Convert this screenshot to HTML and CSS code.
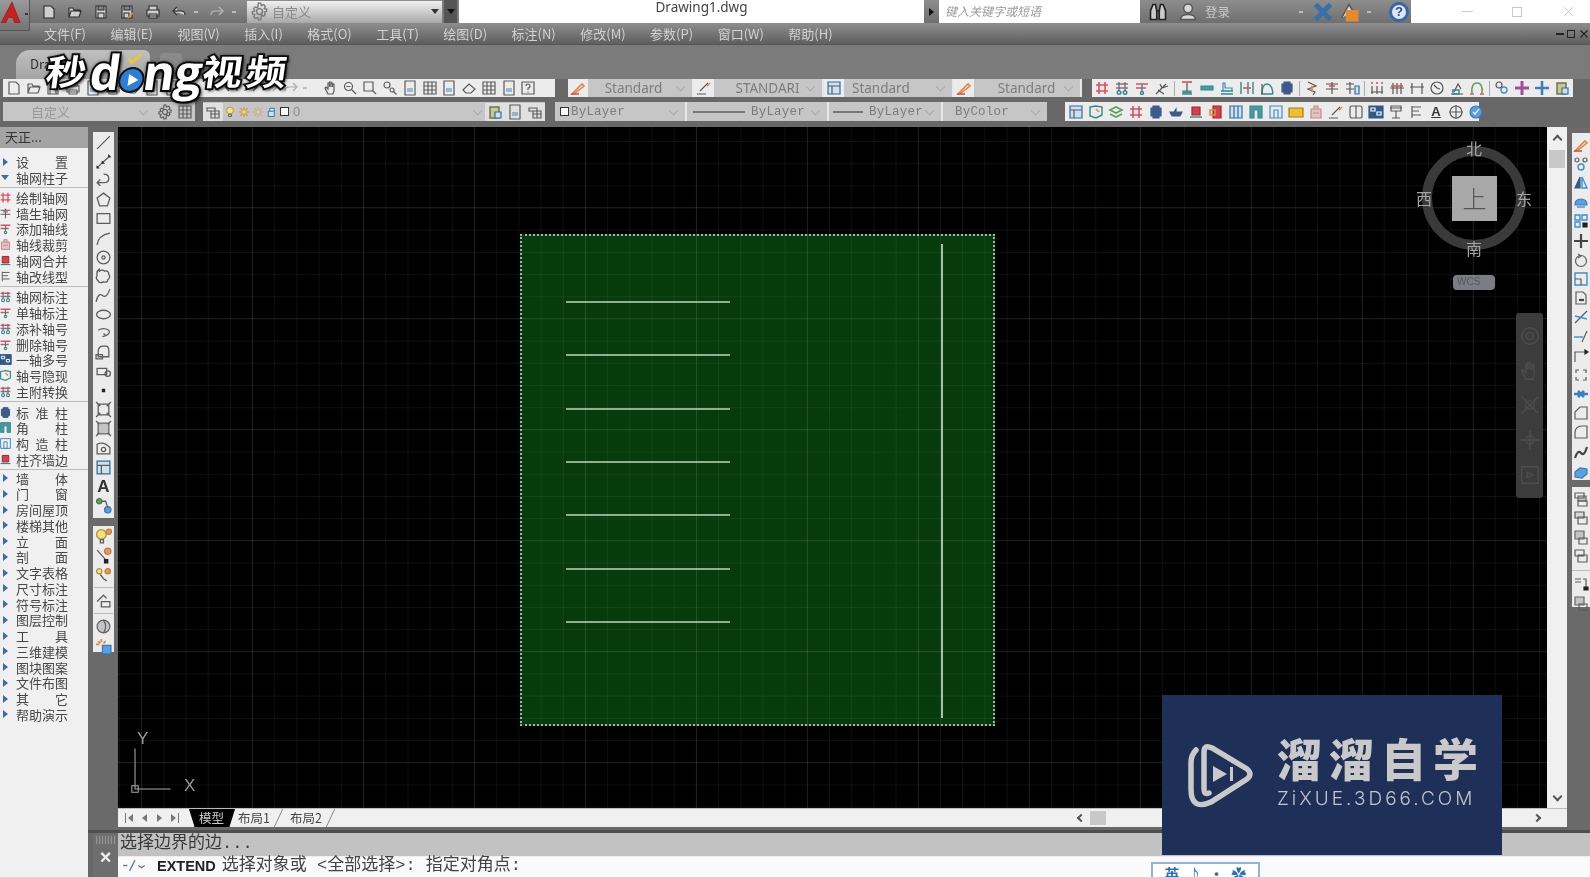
FILE: index.html
```html
<!DOCTYPE html>
<html lang="zh-CN">
<head>
<meta charset="utf-8">
<title>Drawing1.dwg</title>
<link rel="stylesheet" href="styles.css">
</head>
<body>
<svg class="defs" width="0" height="0">
  <symbol id="new" viewBox="0 0 16 16"><path d="M3 2h7l3 3v9H3z"/></symbol>
  <symbol id="open" viewBox="0 0 16 16"><path d="M2 13V4h4l1 2h6v2M2 13l2-6h10l-2 6z"/></symbol>
  <symbol id="save" viewBox="0 0 16 16"><path d="M3 2h10v12H3zM5 2v4h6V2M5 9h6v5H5z"/></symbol>
  <symbol id="saveas" viewBox="0 0 16 16"><path d="M3 2h10v12H3zM5 2v4h6V2M5 9h5v5H5z"/><path class="o" d="M9 14l5-5"/></symbol>
  <symbol id="print" viewBox="0 0 16 16"><path d="M4 6V2h8v4M2 6h12v6H2zM4 10h8v4H4z"/></symbol>
  <symbol id="undo" viewBox="0 0 16 16"><path d="M6 3L2 7l4 4M2 7h8q4 0 4 4"/></symbol>
  <symbol id="redo" viewBox="0 0 16 16"><path d="M10 3l4 4-4 4M14 7H6q-4 0-4 4"/></symbol>
  <symbol id="gear" viewBox="0 0 16 16"><circle cx="8" cy="8" r="2.5"/><path d="M7 1h2l.5 2 2-.8 1.4 1.4-.9 2 2 .4v2l-2 .5.9 2-1.4 1.4-2-.9L9 15H7l-.5-2-2 .9-1.4-1.4.9-2-2-.5V8l2-.4-.9-2 1.4-1.4 2 .8z"/></symbol>
  <symbol id="hand" viewBox="0 0 16 16"><path d="M5 14L2 8l1-1 2 2V3h1.500v4V2H8v5V3h1.500v4V4H11v7l-1 3z"/></symbol>
  <symbol id="zoom" viewBox="0 0 16 16"><circle cx="6.500" cy="6.500" r="4"/><path d="M9.500 9.500l4.500 4.500M4.500 6.500h4"/></symbol>
  <symbol id="zoomw" viewBox="0 0 16 16"><path d="M2 2h9v9H2zM10 10l4 4"/></symbol>
  <symbol id="zoomp" viewBox="0 0 16 16"><circle cx="5" cy="5" r="3"/><circle cx="10" cy="10" r="2"/><path d="M11.500 11.500l3 3"/></symbol>
  <symbol id="doc" viewBox="0 0 16 16"><path d="M3 1h10v14H3z"/><path class="b" d="M5 9h6M5 11h6"/></symbol>
  <symbol id="grid" viewBox="0 0 16 16"><path d="M2 2h12v12H2zM2 6h12M2 10h12M6 2v12M10 2v12"/></symbol>
  <symbol id="help" viewBox="0 0 16 16"><path d="M2 2h12v12H2zM6 6q0-2 2-2t2 2-2 2v2M8 11.500v1"/></symbol>
  <symbol id="erase" viewBox="0 0 16 16"><path d="M2 10l6-6 6 5-4 4H5z"/></symbol>
  <symbol id="hash" viewBox="0 0 16 16"><path class="r" d="M5 2v12M11 2v12M2 5h12M2 11h12"/></symbol>
  <symbol id="hash2" viewBox="0 0 16 16"><path class="r" d="M2 4h12M2 8h12"/><path class="t" d="M5 2v9M11 2v9"/><circle class="t" cx="5" cy="12.500" r="1.800"/><circle class="t" cx="11" cy="12.500" r="1.800"/></symbol>
  <symbol id="hash3" viewBox="0 0 16 16"><path class="r" d="M2 4h12M2 8h10"/><path class="t" d="M8 4v7"/><circle class="t" cx="8" cy="13" r="1.500"/></symbol>
  <symbol id="tool" viewBox="0 0 16 16"><path d="M2 14l6-6M6 4l2 4 4-4M8 8l6-2M4 10l6 4"/></symbol>
  <symbol id="sec" viewBox="0 0 16 16"><path class="r" d="M3 2h10"/><path class="t" d="M3 14h10"/><path class="ti" d="M4 11h8v2H4z"/><path d="M8 3v8"/></symbol>
  <symbol id="bar" viewBox="0 0 16 16"><path class="ti" d="M2 6h12v4H2z"/></symbol>
  <symbol id="steps" viewBox="0 0 16 16"><path class="t" d="M2 14h12M2 11h12"/><path class="b" d="M4 11V3h2v5h7v3"/></symbol>
  <symbol id="dim" viewBox="0 0 16 16"><path class="t" d="M2 2v12M14 2v12M9 2v12"/><path class="r" d="M4 8h8"/></symbol>
  <symbol id="arch" viewBox="0 0 16 16"><path class="t" d="M2 14h12M3 14Q3 4 8 4t6 10"/><path d="M3 14V4"/></symbol>
  <symbol id="col" viewBox="0 0 16 16"><path class="nv" d="M5 2h6v2h2v8h-2v2H5v-2H3V4h2z"/></symbol>
  <symbol id="axis" viewBox="0 0 16 16"><path d="M4 2l8 4-8 3 7 3-2 3"/><path class="o" d="M8 6v6"/></symbol>
  <symbol id="axis2" viewBox="0 0 16 16"><path d="M2 4h12M2 9h12M8 2v12"/><path class="r" d="M5 6h6"/></symbol>
  <symbol id="axis3" viewBox="0 0 16 16"><path d="M2 4h8M2 9h8M6 2v12"/><path class="bl" d="M11 6h4v8h-4z"/></symbol>
  <symbol id="ticks" viewBox="0 0 16 16"><path d="M2 12h12M3 6v8M8 6v8M13 6v8"/><path class="r" d="M3 2v2M8 2v2M13 2v2"/></symbol>
  <symbol id="ticks2" viewBox="0 0 16 16"><path d="M1 8h14M4 3v11M8 3v11M12 3v11"/><path class="r" d="M2 6h12"/></symbol>
  <symbol id="ticks3" viewBox="0 0 16 16"><path d="M1 7h14M3 3v11M13 3v11"/></symbol>
  <symbol id="clock" viewBox="0 0 16 16"><circle cx="8" cy="8" r="6"/><path d="M5 5l3 3 3 1"/></symbol>
  <symbol id="scope" viewBox="0 0 16 16"><path d="M2 14h12M5 12l4-8 3 5"/><path class="t" d="M4 10h6v4H4z"/></symbol>
  <symbol id="loop" viewBox="0 0 16 16"><path class="g" d="M3 13Q2 3 8 3t5 10"/><path class="r" d="M1 14h4M11 14h4"/></symbol>
  <symbol id="links" viewBox="0 0 16 16"><circle cx="5" cy="5" r="3"/><circle class="bg" cx="10" cy="10" r="3"/></symbol>
  <symbol id="plus" viewBox="0 0 16 16"><path class="wp" d="M8 1v14M1 8h14"/></symbol>
  <symbol id="plusb" viewBox="0 0 16 16"><path class="thb" d="M8 1v14M1 8h14"/></symbol>
  <symbol id="clip" viewBox="0 0 16 16"><path class="ol" d="M3 3h9v11H3z"/><path class="bl" d="M8 8h6v6H8z"/></symbol>
  <symbol id="tbl" viewBox="0 0 16 16"><path class="bl" d="M2 2h12v12H2z"/><path d="M2 6h12M6 6v8"/></symbol>
  <symbol id="map" viewBox="0 0 16 16"><path class="t" d="M2 3l6-1 6 1v8l-6 3-6-2z"/><path class="o" d="M8 5l3 3"/></symbol>
  <symbol id="stack" viewBox="0 0 16 16"><path class="g" d="M2 6l6-3 6 3-6 3zM2 10l6 3 6-3"/></symbol>
  <symbol id="ship" viewBox="0 0 16 16"><path class="nv" d="M2 8h4l2-3v3h6l-2 4H4z"/></symbol>
  <symbol id="redb" viewBox="0 0 16 16"><path class="rf" d="M4 3h8v8H4z"/><path class="t" d="M2 13h12"/></symbol>
  <symbol id="pdf" viewBox="0 0 16 16"><path class="rf" d="M5 2h8v12H5z"/><path class="o" d="M2 6h5v5H2z"/></symbol>
  <symbol id="cols" viewBox="0 0 16 16"><path class="bl" d="M2 2h12v12H2zM6 2v12M10 2v12"/></symbol>
  <symbol id="door" viewBox="0 0 16 16"><path class="ti" d="M2 2h12v12h-4V6H6v8H2z"/></symbol>
  <symbol id="door2" viewBox="0 0 16 16"><path class="b" d="M2 2h12v12H2zM6 6h4v8H6z"/></symbol>
  <symbol id="mail" viewBox="0 0 16 16"><path class="yl" d="M1 4h14v9H1z"/></symbol>
  <symbol id="stamp" viewBox="0 0 16 16"><path class="pk" d="M3 5h10v9H3zM6 5V2h4v3M5 9h6"/></symbol>
  <symbol id="brush" viewBox="0 0 16 16"><path d="M1 14h9M4 11l8-8"/><path class="o" d="M11 6l3-3"/></symbol>
  <symbol id="book" viewBox="0 0 16 16"><path d="M4 2h8q2 0 2 2v9q0 1-2 1H4q-2 0-2-2V4q0-2 2-2zM8 2v12"/></symbol>
  <symbol id="blocks" viewBox="0 0 16 16"><path class="nvf" d="M1 2h14v12H1z"/><path class="wh" d="M3 4h4v3H3zM9 8h4v3H9z"/></symbol>
  <symbol id="tree" viewBox="0 0 16 16"><path d="M3 2h10v5H3zM8 7v7M4 14h8M2 4h12"/></symbol>
  <symbol id="flag" viewBox="0 0 16 16"><path d="M4 2v12M4 3h9M4 7h7M4 11h9"/></symbol>
  <symbol id="target" viewBox="0 0 16 16"><circle cx="8" cy="8" r="6"/><path d="M8 1v14M1 8h14"/></symbol>
  <symbol id="ball" viewBox="0 0 16 16"><circle class="blf" cx="8" cy="8" r="6"/><path class="wh" d="M5 8l2 2 4-5"/></symbol>
  <symbol id="layer" viewBox="0 0 16 16"><path d="M2 4h8v3H2zM6 7h8v7H6zM6 10h8M10 7v7"/></symbol>
  <symbol id="bulb" viewBox="0 0 16 16"><circle class="yf" cx="8" cy="6" r="4.500"/><path d="M6 11h4v3H6z"/></symbol>
  <symbol id="sun" viewBox="0 0 16 16"><circle class="yf" cx="8" cy="8" r="3"/><path class="o" d="M8 1v3M8 12v3M1 8h3M12 8h3M3 3l2 2M11 11l2 2M13 3l-2 2M5 11l-2 2"/></symbol>
  <symbol id="lock" viewBox="0 0 16 16"><path class="bl" d="M3 7h8v7H3zM5 7V3h6v4"/></symbol>
  <symbol id="line" viewBox="0 0 16 16"><path d="M2 14L14 2"/></symbol>
  <symbol id="pline" viewBox="0 0 16 16"><path d="M2 14l5-5 7-6"/><path class="k" d="M2 13v1h1zM7 8.500v1h1zM13 2.500v1h1z"/></symbol>
  <symbol id="back" viewBox="0 0 16 16"><path d="M8 2q5 0 5 4t-5 4H2M5 7l-3 3 3 3"/></symbol>
  <symbol id="poly" viewBox="0 0 16 16"><path d="M8 2l6 4.500-2.300 7.500H4.300L2 6.500z"/></symbol>
  <symbol id="rect" viewBox="0 0 16 16"><path d="M2 3.500h12v9H2z"/></symbol>
  <symbol id="arc" viewBox="0 0 16 16"><path d="M2 14Q3 5 14 3"/></symbol>
  <symbol id="circle" viewBox="0 0 16 16"><circle cx="8" cy="8" r="6"/><circle cx="8" cy="8" r="1.500"/></symbol>
  <symbol id="cloud" viewBox="0 0 16 16"><path d="M4 3q3-2 5 0 4-1 4 3 2 3-1 5 0 3-4 2-4 2-5-1-3-2-1-5-1-4 2-6z"/></symbol>
  <symbol id="spline" viewBox="0 0 16 16"><path d="M1 14q2-9 6-6t7-6"/></symbol>
  <symbol id="ell" viewBox="0 0 16 16"><ellipse cx="8" cy="8" rx="6.500" ry="4"/></symbol>
  <symbol id="earc" viewBox="0 0 16 16"><path d="M3 5q5-3 10 0 2 3-3 5M7 11l3-1-2-2"/></symbol>
  <symbol id="ins" viewBox="0 0 16 16"><path d="M3 12V7q0-5 5-5h2q3 0 3 4v6zM1 10h6v4H1z"/></symbol>
  <symbol id="blk" viewBox="0 0 16 16"><path d="M2 5h9v6H2z"/><circle cx="12" cy="10" r="2.500"/></symbol>
  <symbol id="pt" viewBox="0 0 16 16"><path class="k" d="M7 7h2v2H7z"/></symbol>
  <symbol id="hatch" viewBox="0 0 16 16"><path d="M3 3h10v10H3zM1 1l4 4M15 1l-4 4M1 15l4-4M15 15l-4-4"/></symbol>
  <symbol id="grad" viewBox="0 0 16 16"><path class="gyf" d="M3 3h10v10H3z"/><path d="M1 1l3 3M15 1l-3 3M1 15l3-3M15 15l-3-3"/></symbol>
  <symbol id="reg" viewBox="0 0 16 16"><path d="M2 13V4q6-3 12 3v6z"/><circle cx="8" cy="9" r="2"/></symbol>
  <symbol id="add" viewBox="0 0 16 16"><circle class="gf" cx="4" cy="4" r="2.500"/><circle class="blf" cx="12" cy="12" r="3"/><path d="M6 4h4l2 6"/></symbol>
  <symbol id="bulbo" viewBox="0 0 16 16"><circle class="yf" cx="6" cy="6" r="4.500"/><circle class="of" cx="13" cy="3.500" r="2.500"/><path d="M5 11h3v3H5z"/></symbol>
  <symbol id="wand" viewBox="0 0 16 16"><path d="M2 3l9 10"/><circle class="of" cx="12" cy="4" r="3"/><path class="k" d="M9 12h3v3H9z"/></symbol>
  <symbol id="dots" viewBox="0 0 16 16"><circle class="yf" cx="4" cy="5" r="2.500"/><circle class="of" cx="12" cy="5" r="2.500"/><path d="M5 8l3 4 3 2"/></symbol>
  <symbol id="house" viewBox="0 0 16 16"><path d="M2 9l6-6 3 3M6 9h8v5H6z"/></symbol>
  <symbol id="globe" viewBox="0 0 16 16"><circle class="gyf" cx="8" cy="8" r="6"/><path d="M8 2q4 6 0 12"/></symbol>
  <symbol id="star" viewBox="0 0 16 16"><path class="o" d="M6 1v3M1 6h3M3 3l2 2M10 3L8 5"/><path class="blf" d="M7 7h8v8H7z"/></symbol>
  <symbol id="pen" viewBox="0 0 16 16"><path class="o" d="M2 14l10-10 2 2-10 8z"/><path class="r" d="M1 14h8"/></symbol>
  <symbol id="copy" viewBox="0 0 16 16"><circle cx="4" cy="4" r="2"/><circle cx="12" cy="4" r="2"/><circle class="bg" cx="8" cy="11" r="3"/></symbol>
  <symbol id="mirror" viewBox="0 0 16 16"><path class="nvf" d="M7 2L2 13h5z"/><path class="bg" d="M9 2l5 11H9z"/></symbol>
  <symbol id="offset" viewBox="0 0 16 16"><path class="blf" d="M2 11q0-6 6-6t6 6z"/><path class="bg" d="M4 13h8"/></symbol>
  <symbol id="array" viewBox="0 0 16 16"><path class="bg" d="M2 2h5v5H2zM9 2h5v5H9zM2 9h5v5H2z"/><path class="k" d="M10 10h4v4h-4z"/></symbol>
  <symbol id="move" viewBox="0 0 16 16"><path class="thk" d="M8 1v14M1 8h14"/></symbol>
  <symbol id="rot" viewBox="0 0 16 16"><circle cx="8" cy="9" r="5.500"/><path d="M5 2l3 2-3 2"/></symbol>
  <symbol id="scale" viewBox="0 0 16 16"><path class="bg" d="M2 2h12v12H2z"/><path d="M2 8h6v6"/></symbol>
  <symbol id="stretch" viewBox="0 0 16 16"><path d="M3 2h7l3 3v9H3z"/><path class="thk" d="M6 10h5"/></symbol>
  <symbol id="trim" viewBox="0 0 16 16"><path d="M2 14L14 2"/><path class="bg" d="M2 7l12 3"/></symbol>
  <symbol id="ext" viewBox="0 0 16 16"><path d="M14 3L9 14"/><path class="bg" d="M1 9h9"/></symbol>
  <symbol id="brk" viewBox="0 0 16 16"><path d="M2 14V4h10"/><path class="k" d="M12 2l3 2-3 2z"/></symbol>
  <symbol id="brk2" viewBox="0 0 16 16"><path d="M3 6V3h3M10 3h3v3M13 10v3h-3M6 13H3v-3"/></symbol>
  <symbol id="join" viewBox="0 0 16 16"><path class="thb" d="M1 8h5M10 8h5M5 5l3 3-3 3M11 5L8 8l3 3"/></symbol>
  <symbol id="cham" viewBox="0 0 16 16"><path d="M2 14V7l5-5h7v12z"/></symbol>
  <symbol id="fil" viewBox="0 0 16 16"><path d="M2 14V9q0-7 7-7h5v12z"/></symbol>
  <symbol id="wav" viewBox="0 0 16 16"><path class="thk" d="M2 14q3-9 6-5t6-6"/></symbol>
  <symbol id="ex" viewBox="0 0 16 16"><path class="blf" d="M2 9l5-4 7 1v5l-5 4-7-1z"/></symbol>
  <symbol id="draw1" viewBox="0 0 16 16"><path class="gyf" d="M5 5h8v5H5z"/><path d="M2 2h9v5H2zM5 10h9v5H5z"/></symbol>
  <symbol id="draw2" viewBox="0 0 16 16"><path class="wf" d="M2 2h9v6H2z"/><path d="M5 7h9v7H5z"/></symbol>
  <symbol id="draw3" viewBox="0 0 16 16"><path d="M2 2h9v6H2zM5 7h9v7H5z"/></symbol>
  <symbol id="abc" viewBox="0 0 16 16"><path d="M2 4h6M2 7h6M10 4h3v8"/><path class="k" d="M11 12h4v3h-4z"/></symbol>
  <symbol id="bx" viewBox="0 0 16 16"><path class="gyf" d="M2 2h9v8H2z"/><path d="M6 9h8v6H6z"/></symbol>
</svg>

<div class="app">
  <header class="titlebar">
    <div class="t-grey t-left">
      <svg class="i"><use href="#new"/></svg>
      <svg class="i"><use href="#open"/></svg>
      <svg class="i"><use href="#save"/></svg>
      <svg class="i"><use href="#saveas"/></svg>
      <svg class="i"><use href="#print"/></svg>
      <svg class="i"><use href="#undo"/></svg>
      <span class="dot"></span>
      <svg class="i faint"><use href="#redo"/></svg>
      <span class="dot"></span>
      <div class="wscombo">
        <svg class="i"><use href="#gear"/></svg>
        <span class="wsname">自定义</span>
        <span class="caret"></span>
      </div>
      <div class="darkbtn"><span class="caret dark"></span></div>
    </div>
    <div class="t-white t-doc">Drawing1.dwg</div>
    <div class="t-grey t-arrow"><span class="tri"></span></div>
    <div class="t-search">键入关键字或短语</div>
    <div class="t-grey t-right">
      <svg class="binoc" viewBox="0 0 16 16"><path d="M2 14V7l2-5h2l1 5v7zM9 14V7l1-5h2l2 5v7zM7 7h2"/></svg>
      <svg class="i user" viewBox="0 0 16 16"><circle class="wf" cx="8" cy="5" r="3.500"/><path class="wf" d="M2 14q0-4 6-4t6 4z"/></svg>
      <span class="login">登录</span>
      <span class="dot d1"></span>
      <svg class="i xch" viewBox="0 0 16 16"><path class="xb" d="M2 2l12 12M14 2L2 14"/></svg>
      <svg class="i lk" viewBox="0 0 16 16"><path class="wf" d="M2 13L8 2l3 5"/><path class="oflat" d="M6 7h9v8H6z"/></svg>
      <span class="dot"></span>
      <span class="qm">?</span>
      <span class="dot"></span>
    </div>
    <div class="t-white t-win">
      <span class="w-min"></span>
      <span class="w-max"></span>
      <svg class="w-x" viewBox="0 0 12 12"><path d="M1 1l10 10M11 1L1 11"/></svg>
    </div>
  </header>

  <nav class="menubar">
    <span class="mi">文件(F)</span><span class="mi">编辑(E)</span><span class="mi">视图(V)</span><span class="mi">插入(I)</span><span class="mi">格式(O)</span><span class="mi">工具(T)</span><span class="mi">绘图(D)</span><span class="mi">标注(N)</span><span class="mi">修改(M)</span><span class="mi">参数(P)</span><span class="mi">窗口(W)</span><span class="mi">帮助(H)</span>
    <span class="mdi"><i class="m1"></i><i class="m2"></i><i class="m3">×</i></span>
  </nav>

  <div class="tabbar">
    <div class="doctab">Drawing1</div>
    <div class="newtab"></div>
  </div>

  <div class="tb tb1">
    <div class="seg seg-icons a1">
      <svg class="i"><use href="#new"/></svg><svg class="i"><use href="#open"/></svg><svg class="i"><use href="#save"/></svg><svg class="i"><use href="#print"/></svg><svg class="i"><use href="#doc"/></svg><svg class="i"><use href="#print"/></svg><svg class="i"><use href="#erase"/></svg><svg class="i"><use href="#doc"/></svg><svg class="i"><use href="#doc"/></svg><svg class="i"><use href="#erase"/></svg><svg class="i"><use href="#undo"/></svg><svg class="i"><use href="#undo"/></svg><svg class="i"><use href="#redo"/></svg><svg class="i faint"><use href="#redo"/></svg><svg class="i faint"><use href="#redo"/></svg>
      <span class="dot w20"></span>
      <svg class="i"><use href="#hand"/></svg><svg class="i"><use href="#zoom"/></svg><svg class="i"><use href="#zoomw"/></svg><svg class="i"><use href="#zoomp"/></svg>
      <svg class="i"><use href="#doc"/></svg><svg class="i"><use href="#grid"/></svg><svg class="i"><use href="#doc"/></svg><svg class="i"><use href="#erase"/></svg><svg class="i"><use href="#grid"/></svg><svg class="i"><use href="#doc"/></svg><svg class="i"><use href="#help"/></svg>
    </div>
    <div class="gap g1"></div>
    <div class="seg combo c-s1"><svg class="i"><use href="#pen"/></svg><span class="val">Standard</span><span class="chev"></span></div>
    <div class="seg combo c-s2"><svg class="i"><use href="#brush"/></svg><span class="val wide">STANDARI</span><span class="chev"></span></div>
    <div class="seg combo c-s2"><svg class="i"><use href="#tbl"/></svg><span class="val left">Standard</span><span class="chev"></span></div>
    <div class="seg combo c-s3"><svg class="i"><use href="#pen"/></svg><span class="val wide">Standard</span><span class="chev"></span></div>
    <div class="gap g2"></div>
    <div class="seg seg-icons a2">
      <svg class="i"><use href="#hash"/></svg><svg class="i"><use href="#hash2"/></svg><svg class="i"><use href="#hash3"/></svg><svg class="i"><use href="#tool"/></svg>
      <span class="vs"></span>
      <svg class="i"><use href="#sec"/></svg><svg class="i"><use href="#bar"/></svg><svg class="i"><use href="#steps"/></svg><svg class="i"><use href="#dim"/></svg><svg class="i"><use href="#arch"/></svg><svg class="i"><use href="#col"/></svg>
      <span class="vs"></span>
      <svg class="i"><use href="#axis"/></svg><svg class="i"><use href="#axis2"/></svg><svg class="i"><use href="#axis3"/></svg>
      <span class="vs"></span>
      <svg class="i"><use href="#ticks"/></svg><svg class="i"><use href="#ticks2"/></svg><svg class="i"><use href="#ticks3"/></svg><svg class="i"><use href="#clock"/></svg><svg class="i"><use href="#scope"/></svg><svg class="i"><use href="#loop"/></svg>
      <span class="vs"></span>
      <svg class="i"><use href="#links"/></svg><svg class="i"><use href="#plus"/></svg><svg class="i"><use href="#plusb"/></svg><svg class="i"><use href="#clip"/></svg>
    </div>
  </div>

  <div class="tb tb2">
    <div class="seg combo c-ws"><span class="val left ws">自定义</span><span class="chev"></span><svg class="i"><use href="#gear"/></svg><svg class="i"><use href="#grid"/></svg></div>
    <div class="gap g3"></div>
    <div class="seg combo c-layer">
      <svg class="i"><use href="#layer"/></svg><svg class="i sm"><use href="#bulb"/></svg><svg class="i sm"><use href="#sun"/></svg><svg class="i sm faint"><use href="#sun"/></svg><svg class="i sm"><use href="#lock"/></svg><span class="sw"></span><span class="layer0">0</span><span class="chev"></span>
      <svg class="i"><use href="#clip"/></svg><svg class="i"><use href="#doc"/></svg><svg class="i"><use href="#layer"/></svg>
    </div>
    <div class="gap g4"></div>
    <div class="seg combo c-color"><span class="sw"></span><span class="mono">ByLayer</span><span class="chev"></span></div>
    <div class="seg combo c-lt"><span class="ln"></span><span class="mono">ByLayer</span><span class="chev"></span></div>
    <div class="seg combo c-lw"><span class="ln short"></span><span class="mono">ByLayer</span><span class="chev"></span></div>
    <div class="seg combo c-plot"><span class="mono">ByColor</span><span class="chev"></span></div>
    <div class="gap g5"></div>
    <div class="seg seg-icons a3">
      <svg class="i"><use href="#tbl"/></svg><svg class="i"><use href="#map"/></svg><svg class="i"><use href="#stack"/></svg><svg class="i"><use href="#hash"/></svg><svg class="i"><use href="#col"/></svg><svg class="i"><use href="#ship"/></svg><svg class="i"><use href="#redb"/></svg><svg class="i"><use href="#pdf"/></svg><svg class="i"><use href="#cols"/></svg><svg class="i"><use href="#door"/></svg><svg class="i"><use href="#door2"/></svg><svg class="i"><use href="#mail"/></svg><svg class="i"><use href="#stamp"/></svg><svg class="i"><use href="#brush"/></svg><svg class="i"><use href="#book"/></svg><svg class="i"><use href="#blocks"/></svg><svg class="i"><use href="#tree"/></svg><svg class="i"><use href="#flag"/></svg><span class="a-ic">A</span><svg class="i"><use href="#target"/></svg><svg class="i"><use href="#ball"/></svg>
    </div>
  </div>

  <main class="main">
    <aside class="panel">
      <div class="p-head">天正...</div>
      <div class="p-group first">
        <div class="row"><span class="ar"></span><span class="lb">设 置</span></div>
        <div class="row"><span class="ar down"></span><span class="lb">轴网柱子</span></div>
      </div>
      <div class="p-group">
        <div class="row"><svg class="pi"><use href="#hash"/></svg><span class="lb">绘制轴网</span></div>
        <div class="row"><svg class="pi"><use href="#axis2"/></svg><span class="lb">墙生轴网</span></div>
        <div class="row"><svg class="pi"><use href="#hash3"/></svg><span class="lb">添加轴线</span></div>
        <div class="row"><svg class="pi"><use href="#stamp"/></svg><span class="lb">轴线裁剪</span></div>
        <div class="row"><svg class="pi"><use href="#redb"/></svg><span class="lb">轴网合并</span></div>
        <div class="row"><svg class="pi"><use href="#flag"/></svg><span class="lb">轴改线型</span></div>
      </div>
      <div class="p-group">
        <div class="row"><svg class="pi"><use href="#hash2"/></svg><span class="lb">轴网标注</span></div>
        <div class="row"><svg class="pi"><use href="#hash3"/></svg><span class="lb">单轴标注</span></div>
        <div class="row"><svg class="pi"><use href="#hash2"/></svg><span class="lb">添补轴号</span></div>
        <div class="row"><svg class="pi"><use href="#hash3"/></svg><span class="lb">删除轴号</span></div>
        <div class="row"><svg class="pi"><use href="#blocks"/></svg><span class="lb">一轴多号</span></div>
        <div class="row"><svg class="pi"><use href="#map"/></svg><span class="lb">轴号隐现</span></div>
        <div class="row"><svg class="pi"><use href="#hash2"/></svg><span class="lb">主附转换</span></div>
      </div>
      <div class="p-group">
        <div class="row"><svg class="pi"><use href="#col"/></svg><span class="lb">标 准 柱</span></div>
        <div class="row"><svg class="pi"><use href="#door"/></svg><span class="lb">角 柱</span></div>
        <div class="row"><svg class="pi"><use href="#door2"/></svg><span class="lb">构 造 柱</span></div>
        <div class="row"><svg class="pi"><use href="#redb"/></svg><span class="lb">柱齐墙边</span></div>
      </div>
      <div class="p-group last">
        <div class="row"><span class="ar"></span><span class="lb">墙 体</span></div>
        <div class="row"><span class="ar"></span><span class="lb">门 窗</span></div>
        <div class="row"><span class="ar"></span><span class="lb">房间屋顶</span></div>
        <div class="row"><span class="ar"></span><span class="lb">楼梯其他</span></div>
        <div class="row"><span class="ar"></span><span class="lb">立 面</span></div>
        <div class="row"><span class="ar"></span><span class="lb">剖 面</span></div>
        <div class="row"><span class="ar"></span><span class="lb">文字表格</span></div>
        <div class="row"><span class="ar"></span><span class="lb">尺寸标注</span></div>
        <div class="row"><span class="ar"></span><span class="lb">符号标注</span></div>
        <div class="row"><span class="ar"></span><span class="lb">图层控制</span></div>
        <div class="row"><span class="ar"></span><span class="lb">工 具</span></div>
        <div class="row"><span class="ar"></span><span class="lb">三维建模</span></div>
        <div class="row"><span class="ar"></span><span class="lb">图块图案</span></div>
        <div class="row"><span class="ar"></span><span class="lb">文件布图</span></div>
        <div class="row"><span class="ar"></span><span class="lb">其 它</span></div>
        <div class="row"><span class="ar"></span><span class="lb">帮助演示</span></div>
      </div>
    </aside>

    <div class="work">
      <div class="work-top">
        <div class="vcol">
          <div class="vbar one">
            <svg class="vi"><use href="#line"/></svg><svg class="vi"><use href="#pline"/></svg><svg class="vi"><use href="#back"/></svg><svg class="vi"><use href="#poly"/></svg><svg class="vi"><use href="#rect"/></svg><svg class="vi"><use href="#arc"/></svg><svg class="vi"><use href="#circle"/></svg><svg class="vi"><use href="#cloud"/></svg><svg class="vi"><use href="#spline"/></svg><svg class="vi"><use href="#ell"/></svg><svg class="vi"><use href="#earc"/></svg><svg class="vi"><use href="#ins"/></svg><svg class="vi"><use href="#blk"/></svg><svg class="vi"><use href="#pt"/></svg><svg class="vi"><use href="#hatch"/></svg><svg class="vi"><use href="#grad"/></svg><svg class="vi"><use href="#reg"/></svg><svg class="vi"><use href="#tbl"/></svg><span class="va">A</span><svg class="vi"><use href="#add"/></svg>
          </div>
          <div class="vbar two">
            <svg class="vi"><use href="#bulbo"/></svg><svg class="vi"><use href="#wand"/></svg><svg class="vi"><use href="#dots"/></svg><span class="hs"></span><svg class="vi"><use href="#house"/></svg><span class="hs"></span><svg class="vi"><use href="#globe"/></svg><svg class="vi"><use href="#star"/></svg>
          </div>
        </div>

        <div class="center">
          <div class="cv-row">
            <div class="canvas">
              <div class="limits">
                <span class="hl l1"></span><span class="hl l2"></span><span class="hl l3"></span><span class="hl l4"></span><span class="hl l5"></span><span class="hl l6"></span><span class="hl l7"></span>
                <span class="vl"></span>
              </div>
              <div class="grid-ov"></div>
              <div class="cube">
                <span class="ring"></span>
                <span class="face">上</span>
                <span class="dir n">北</span><span class="dir w">西</span><span class="dir e">东</span><span class="dir s">南</span>
              </div>
              <div class="wcs">WCS</div>
              <div class="navbar">
                <svg class="nv-i" viewBox="0 0 16 16"><circle cx="8" cy="8" r="6"/><circle cx="8" cy="8" r="2.500"/></svg>
                <svg class="nv-i" viewBox="0 0 16 16"><use href="#hand"/></svg>
                <svg class="nv-i" viewBox="0 0 16 16"><path d="M2 2l12 12M14 2L2 14"/><circle cx="8" cy="8" r="3"/></svg>
                <svg class="nv-i" viewBox="0 0 16 16"><path d="M8 1v14M1 8h14"/><circle cx="8" cy="8" r="3"/></svg>
                <svg class="nv-i" viewBox="0 0 16 16"><path d="M2 2h12v12H2zM6 6l4 2-4 2z"/></svg>
              </div>
              <svg class="ucs" viewBox="0 0 60 62"><path d="M4 2v50h44"/><path d="M0 48h8v8H0z"/></svg>
              <span class="ax ay">Y</span><span class="ax ax-x">X</span>
            </div>
            <div class="vscroll">
              <span class="chv up"></span>
              <span class="thumb"></span>
              <span class="chv dn"></span>
            </div>
          </div>
          <div class="ltabs">
            <span class="nav-b bk bar-l"></span><span class="nav-b bk"></span><span class="nav-b fw"></span><span class="nav-b fw bar-r"></span>
            <span class="lt on">模型</span><span class="lt">布局1</span><span class="lt">布局2</span>
            <span class="hs-l"></span><span class="hs-th"></span><span class="hs-r"></span>
          </div>
        </div>

        <div class="rcol">
          <div class="rbar one">
            <svg class="ri"><use href="#pen"/></svg><svg class="ri"><use href="#copy"/></svg><svg class="ri"><use href="#mirror"/></svg><svg class="ri"><use href="#offset"/></svg><svg class="ri"><use href="#array"/></svg><svg class="ri"><use href="#move"/></svg><svg class="ri"><use href="#rot"/></svg><svg class="ri"><use href="#scale"/></svg><svg class="ri"><use href="#stretch"/></svg><svg class="ri"><use href="#trim"/></svg><svg class="ri"><use href="#ext"/></svg><svg class="ri"><use href="#brk"/></svg><svg class="ri"><use href="#brk2"/></svg><svg class="ri"><use href="#join"/></svg><svg class="ri"><use href="#cham"/></svg><svg class="ri"><use href="#fil"/></svg><svg class="ri"><use href="#wav"/></svg><svg class="ri"><use href="#ex"/></svg>
          </div>
          <div class="rbar two">
            <svg class="ri"><use href="#draw1"/></svg><svg class="ri"><use href="#draw2"/></svg><svg class="ri"><use href="#bx"/></svg><svg class="ri"><use href="#draw3"/></svg><span class="hs r"></span><svg class="ri"><use href="#abc"/></svg><svg class="ri"><use href="#bx"/></svg>
          </div>
        </div>
      </div>

      <div class="cmd">
        <div class="grip"><span class="grip-d"></span><span class="cx">×</span></div>
        <div class="cmd-lines">
          <div class="c-hist">选择边界的边...</div>
          <div class="c-in">
            <svg class="c-ic" viewBox="0 0 24 12"><path class="c-s" d="M1 6h4"/><path class="c-b" d="M7 11L12 1"/><path class="c-s" d="M15 6l3 2 3-2"/></svg>
            <b>EXTEND</b><span class="c-tx">选择对象或 &lt;全部选择&gt;: 指定对角点:</span>
          </div>
        </div>
      </div>
    </div>
  </main>

  <div class="a-btn">
    <svg class="a-logo" viewBox="0 0 24 24"><path class="a-red" d="M0 24L12 1l9 23h-6l-2-6H8l-3 6z"/></svg>
    <span class="a-caret"></span>
  </div>

  <div class="wm-top"><span class="wm-c">秒</span><span class="wm-l">d</span><span class="wm-o"><i class="wm-tick"></i><i class="wm-play"></i></span><span class="wm-l">ng</span><span class="wm-c">视频</span></div>

  <div class="wm-box">
    <svg class="wm-logo" viewBox="0 0 66 68"><path d="M21 52Q16 54 16 48V11Q16 3 24 7L59 28Q65 33 59 38L23 61Q3 70 3 48V22Q3 14 8 9"/><path class="wm-f" d="M25 25l14 8-14 8zM42 26h3v14h-3z"/></svg>
    <div class="wm-txt">
      <div class="wm-cn">溜溜自学</div>
      <div class="wm-en">ZiXUE.3D66.COM</div>
    </div>
  </div>

  <div class="ime"><span>英</span><span>♪</span><span>·</span><span>✿</span></div>
</div>
</body>
</html>
```

FILE: styles.css
```css
* { box-sizing: border-box; }
html, body { margin: 0; padding: 0; background: #666; }
body { font-family: "Noto Sans CJK SC", "Liberation Sans", sans-serif; overflow: hidden; }
.defs { position: absolute; }

.app {
  position: relative;
  width: 1590px;
  height: 877px;
  overflow: hidden;
  display: flex;
  flex-direction: column;
  background: #686868;
  filter: blur(.5px);
}

/* shared svg colour classes */
.i, .vi, .ri, .pi { fill: none; stroke: #5c5c5c; stroke-width: 1.2; flex: none; }
.i { width: 16px; height: 16px; margin: 0 2px; }
.faint { opacity: .45; }
.r { stroke: #dc4f60; stroke-width: 1.6; }
.t { stroke: #2f8a8c; stroke-width: 1.4; }
.ti { stroke: #2f8a8c; fill: #4a9aa6; }
.b { stroke: #3a8ac8; }
.bl { stroke: #2f6f9f; fill: #cfe0ee; }
.bg { stroke: #3f8fd0; stroke-width: 1.4; }
.o { stroke: #e08a3a; stroke-width: 1.6; }
.g { stroke: #5aa05a; stroke-width: 1.6; }
.k { fill: #222; stroke: #222; }
.nv { fill: #3c5a8c; stroke: #3c5a8c; }
.nvf { fill: #2f5a88; stroke: #2f5a88; }
.wh { stroke: #fff; fill: none; }
.wp { stroke: #a0509a; stroke-width: 3; }
.thb { stroke: #3a80c0; stroke-width: 2.600; }
.thk { stroke: #444; stroke-width: 2.200; }
.ol { stroke: #6a7a3a; fill: #c9c79a; stroke-width: 1.500; }
.rf { fill: #d8404e; stroke: #a02530; }
.yl { fill: #f0c030; stroke: #a07a20; }
.pk { stroke: #c08a90; fill: #e0c4c4; }
.yf { fill: #f7e27a; stroke: #a89640; }
.of { fill: #e89a58; stroke: #c87a38; }
.gf { fill: #5aa85a; stroke: #3d7d3d; }
.blf { fill: #5aa0e0; stroke: #3a78b8; }
.gyf { fill: #c4c4c4; stroke: #666; }
.wf { fill: #d8d8d8; stroke: #555; }

/* title bar */
.titlebar { height: 23px; display: flex; flex: none; background: #fff; }
.t-grey { background: linear-gradient(#8d8d8d, #6f6f6f); display: flex; align-items: center; height: 23px; flex: none; }
.t-white { background: #fff; height: 23px; flex: none; }
.t-left { width: 459px; padding-left: 36px; }
.t-left .i { margin: 0 5px; stroke: #2d2d2d; fill: #cfcfcf; stroke-width: 1.1; }
.t-left .i.faint { stroke: #bbb; fill: none; opacity: 1; }
.dot { width: 4px; height: 2px; background: #bbb; margin: 0 6px 0 2px; flex: none; }
.w20 { margin: 0 14px 0 2px; }
.wscombo {
  width: 195px; height: 22px; margin-left: 5px; flex: none;
  background: linear-gradient(#f0f0f0, #a8a8a8);
  display: flex; align-items: center; padding-left: 1px;
}
.wscombo .i { stroke: #777; fill: none; margin: 0 3px 0 2px; width: 19px; height: 19px; }
.wsname { font-size: 13px; color: #8a8a8a; }
.caret { margin-left: auto; margin-right: 3px; width: 0; height: 0; border: 4px solid transparent; border-top: 5px solid #333; border-bottom: 0; }
.caret.dark { margin: 0; border-top-color: #111; }
.darkbtn { width: 17px; height: 23px; background: #555; display: flex; align-items: center; justify-content: center; border: 0 solid #7d7d7d; border-width: 0 2px; flex: none; }
.t-doc { width: 465px; text-align: center; font-size: 13.500px; color: #444; line-height: 14px; padding-left: 20px; font-family: "Noto Sans", "Liberation Sans", sans-serif; }
.t-arrow { width: 15px; justify-content: center; }
.tri { width: 0; height: 0; border: 4px solid transparent; border-left: 5px solid #111; border-right: 0; }
.t-search { width: 201px; height: 22px; flex: none; background: #fff; color: #9a9a9a; font-size: 12px; font-style: italic; line-height: 22px; padding-left: 6px; white-space: nowrap; }
.t-right { width: 271px; }
.t-right .i { margin: 0; width: 20px; height: 20px; }
.binoc { width: 20px; height: 20px; margin-left: 8px; flex: none; fill: #ccc; stroke: #222; stroke-width: 1.300; }
.t-right .user { margin-left: 10px; }
.login { color: #c8c8c8; font-size: 12.500px; margin-left: 7px; width: 27px; flex: none; white-space: nowrap; }
.d1 { margin-left: 67px; margin-right: 10px; }
.t-right .xch { margin-right: 6px; }
.xb { stroke: #3a70a8; stroke-width: 4; }
.t-right .lk { margin-right: 6px; }
.oflat { fill: #e58a2c; stroke: #e58a2c; }
.qm { width: 20px; height: 20px; border-radius: 50%; background: #dfe6f2; border: 3px solid #3566a8; color: #2a4f88; font: 700 13px/14px "Liberation Sans", sans-serif; text-align: center; margin: 0 5px 0 12px; flex: none; }
.t-win { width: 180px; display: flex; align-items: center; padding-left: 51px; }
.w-min { width: 11px; height: 1px; background: #c8c8c8; flex: none; }
.w-max { width: 10px; height: 10px; border: 1px solid #c8c8c8; margin-left: 39px; flex: none; }
.w-x { width: 11px; height: 11px; margin-left: 41px; stroke: #c8c8c8; fill: none; flex: none; }

/* menu */
.menubar {
  height: 22px; flex: none; display: flex; align-items: center;
  padding-left: 44px; gap: 24.500px;
  background: linear-gradient(#8e8e8e, #5e5e5e);
  border-bottom: 1px solid #565656;
}
.mi { color: #d2d2d2; font-size: 13px; white-space: nowrap; }
.mdi { margin-left: auto; display: flex; align-items: center; gap: 3px; }
.mdi i { display: block; }
.m1 { width: 8px; height: 2px; background: #222; }
.m2 { width: 8px; height: 8px; border: 1px solid #222; }
.m3 { font-style: normal; font-size: 12px; color: #222; line-height: 12px; font-weight: 700; }

/* file tab row */
.tabbar { height: 34px; flex: none; background: #7b7b7b; display: flex; align-items: flex-end; padding-left: 16px; }
.doctab {
  width: 134px; height: 29px; background: linear-gradient(#c0c0c0, #a4a4a4);
  color: #333; font-size: 13px; line-height: 27px; padding-left: 14px;
  border-radius: 14px 6px 0 0;
}
.newtab { width: 22px; height: 19px; margin: 0 0 7px 10px; background: #8a8a8a; border-radius: 3px; }

/* toolbars */
.tb { display: flex; flex: none; height: 18px; padding-left: 3px; background: #686868; }
.tb2 { height: 19px; margin-top: 5px; }
.seg { display: flex; align-items: center; height: 100%; flex: none; }
.seg-icons { background: #ececec; }
.a1 { width: 552px; padding-left: 1px; }
.a1 .i { margin: 0 1.900px; }
.gap { flex: none; }
.g1 { width: 13px; }
.g2 { width: 10px; }
.g3 { width: 8px; }
.g4 { width: 10px; }
.g5 { width: 18px; }
.combo { background: #c6c6c6; border-right: 2px solid #e8e8e8; color: #7c7c7c; }
.combo .i { background: #ececec; margin: 0; width: 20px; height: 18px; padding: 1px; }
.c-s1 { width: 126px; }
.c-s2 { width: 130px; }
.c-s3 { width: 128px; }
.val { flex: 1; text-align: center; font-size: 13.500px; font-family: "Noto Sans", "Liberation Sans", sans-serif; white-space: nowrap; padding-left: 8px; }
.val.wide { padding-left: 20px; }
.val.left { text-align: left; padding-left: 8px; }
.val.ws { font-family: "Noto Sans CJK SC", sans-serif; font-size: 13px; color: #9a9a9a; }
.chev { width: 7px; height: 7px; border: 0 solid #aaa; border-width: 0 1px 1px 0; transform: rotate(45deg); margin: -3px 8px 0 6px; flex: none; }
.a2 { width: 481px; }
.a2 .i { margin: 0 2px; stroke: #555; }
.vs { width: 1px; height: 15px; background: #aaa; margin: 0 2px; flex: none; }

.c-ws { width: 192px; border-right: 0; }
.c-ws .val.ws { padding-left: 28px; }
.c-ws .i { background: transparent; }
.c-layer { width: 342px; border-right: 0; }
.c-layer .i { background: #e0e0e0; width: 20px; }
.c-layer .i.sm { background: #c6c6c6; width: 14px; }
.c-layer .chev { margin-left: auto; margin-right: 4px; }
.sw { width: 9px; height: 9px; background: #fff; border: 1px solid #333; flex: none; margin-left: 1px; }
.layer0 { font-size: 13px; color: #8a8a8a; margin-left: 4px; font-family: "Liberation Sans", sans-serif; }
.c-color { width: 132px; padding-left: 4px; }
.mono { font-family: "Liberation Mono", monospace; font-size: 12.500px; color: #7c7c7c; margin-left: 2px; letter-spacing: .2px; }
.c-color .chev, .c-lt .chev, .c-lw .chev, .c-plot .chev { margin-left: auto; }
.c-lt { width: 142px; padding-left: 6px; }
.ln { width: 52px; height: 2px; background: #777; margin-right: 4px; flex: none; }
.ln.short { width: 30px; }
.c-lw { width: 114px; padding-left: 4px; }
.c-plot { width: 104px; padding-left: 10px; border-right: 0; }
.a3 { width: 414px; padding-left: 1px; }
.a3 .i { margin: 0 2px; }
.a-ic { width: 20px; text-align: center; font: 700 13px "Liberation Sans", sans-serif; color: #333; flex: none; text-decoration: underline; }

/* main */
.main { flex: 1; display: flex; margin-top: 6px; min-height: 0; }
.panel { width: 88px; flex: none; background: #f0f0f0; display: flex; flex-direction: column; }
.p-head { height: 21px; background: #a4a4a4; color: #333; font-size: 13px; line-height: 20px; padding-left: 5px; flex: none; }
.p-group { padding: 2px 0; border-bottom: 1px solid #bbb; }
.p-group.first { padding-top: 6px; padding-bottom: 1px; }
.p-group.last { border-bottom: 0; padding-top: 0; }
.row { height: 15.750px; display: flex; align-items: center; position: relative; }
.lb { position: absolute; left: 16px; width: 52px; text-align: justify; text-align-last: justify; font-size: 13px; line-height: 15px; color: #484848; }
.ar { width: 0; height: 0; margin-left: 3px; border: 4px solid transparent; border-left: 5px solid #3a6ea5; border-right: 0; }
.ar.down { margin-left: 1px; border: 4px solid transparent; border-top: 5px solid #3a6ea5; border-bottom: 0; }
.pi { width: 13px; height: 13px; margin-left: -1px; }

.work { flex: 1; display: flex; flex-direction: column; min-width: 0; }
.work-top { flex: none; height: 703px; display: flex; }
.vcol { width: 30px; flex: none; padding: 5px 0 0 5px; display: flex; flex-direction: column; background: #6a6a6a; }
.vbar { width: 21px; background: #ececec; display: flex; flex-direction: column; align-items: center; flex: none; }
.vbar.one { height: 386px; padding-top: 1px; }
.vbar.two { height: 126px; margin-top: 8px; padding-top: 1px; }
.vi { width: 17px; height: 17px; margin: 1.050px 0; }
.va { height: 19px; font: 700 17px/19px "Liberation Sans", sans-serif; color: #333; }
.hs { width: 19px; height: 1px; background: #bbb; margin: 3px 0; flex: none; }
.hs.r { width: 18px; margin: 4px 0 3px; }

.center { width: 1449px; flex: none; display: flex; flex-direction: column; }
.cv-row { height: 681px; display: flex; flex: none; }
.canvas { width: 1429px; height: 681px; background: #000; position: relative; overflow: hidden; flex: none; }
.limits { position: absolute; left: 402px; top: 107px; width: 475px; height: 492px; background: #073a0c; border: 2px dotted #a8b0a8; }
.hl { position: absolute; left: 44px; width: 164px; height: 2px; background: #8fb08f; }
.l1 { top: 65px; } .l2 { top: 118px; } .l3 { top: 172px; } .l4 { top: 225px; } .l5 { top: 278px; } .l6 { top: 332px; } .l7 { top: 385px; }
.vl { position: absolute; left: 419px; top: 8px; width: 2px; height: 474px; background: #a5c0a5; }
.grid-ov {
  position: absolute; inset: 0;
  background-image:
    linear-gradient(to right, rgba(255,255,255,.07) 1px, transparent 1px),
    linear-gradient(to bottom, rgba(255,255,255,.07) 1px, transparent 1px),
    linear-gradient(to right, rgba(255,255,255,.06) 1px, transparent 1px),
    linear-gradient(to bottom, rgba(255,255,255,.06) 1px, transparent 1px);
  background-size: 111px 100%, 100% 111px, 22.200px 100%, 100% 22.200px;
  background-position: 23px 0, 0 80px, 1px 0, 0 14px;
}
.cube { position: absolute; left: 1296px; top: 11px; width: 120px; height: 120px; color: #9a9a9a; }
.ring { position: absolute; left: 8px; top: 8px; width: 104px; height: 104px; border: 10px solid #3a3a3a; border-radius: 50%; }
.face { position: absolute; left: 38px; top: 38px; width: 45px; height: 45px; background: #a8a8a8; color: #555; font-size: 24px; font-weight: 300; line-height: 44px; text-align: center; }
.dir { position: absolute; width: 20px; text-align: center; font-size: 16px; line-height: 20px; color: #a4a4a4; }
.dir.n { left: 50px; top: 0; } .dir.s { left: 50px; top: 100px; } .dir.w { left: 0; top: 50px; } .dir.e { left: 100px; top: 50px; }
.wcs { position: absolute; left: 1335px; top: 148px; width: 42px; height: 15px; background: #7c7c84; border-radius: 4px; color: #585858; font: 10px/14px "Liberation Sans", sans-serif; padding-left: 4px; }
.navbar { position: absolute; left: 1398px; top: 186px; width: 27px; height: 185px; background: #3c3c3c; border-radius: 3px; display: flex; flex-direction: column; align-items: center; justify-content: space-around; padding: 6px 0; }
.nv-i { width: 22px; height: 22px; fill: none; stroke: #4e4e4e; }
.ucs { position: absolute; left: 13px; top: 620px; width: 50px; height: 50px; fill: none; stroke: #a8a8a8; stroke-width: 1.300; }
.ax { position: absolute; color: #999; font: 17px "Liberation Sans", sans-serif; }
.ay { left: 19px; top: 602px; }
.ax-x { left: 66px; top: 649px; }
.vscroll { width: 20px; height: 681px; background: #f0f0f0; display: flex; flex-direction: column; align-items: center; flex: none; padding-top: 9px; }
.chv { width: 7px; height: 7px; border: 0 solid #555; flex: none; }
.chv.up { border-width: 2px 0 0 2px; transform: rotate(45deg); }
.chv.dn { border-width: 0 2px 2px 0; transform: rotate(45deg); margin-top: auto; margin-bottom: 8px; }
.thumb { width: 16px; height: 18px; background: #c8c8c8; margin-top: 7px; flex: none; }
.ltabs { height: 19px; background: #f0f0f0; border-top: 1px solid #bbb; display: flex; align-items: center; padding-left: 5px; flex: none; }
.nav-b { width: 14.500px; height: 12px; flex: none; display: flex; align-items: center; justify-content: center; }
.nav-b::before { content: ""; width: 0; height: 0; border: 4px solid transparent; }
.bk::before { border-right: 5px solid #777; border-left: 0; }
.fw::before { border-left: 5px solid #777; border-right: 0; }
.bar-l { background: linear-gradient(#777,#777) 2px 1px / 1px 10px no-repeat; }
.bar-r { background: linear-gradient(#777,#777) 11px 1px / 1px 10px no-repeat; }
.lt { font-size: 12.500px; line-height: 17px; height: 18px; color: #444; padding: 0 9px 0 7px; margin-left: 4px; position: relative; flex: none; }
.lt::after { content: ""; position: absolute; right: 0; top: 0; width: 1px; height: 18px; background: #888; transform: skewX(-25deg); }
.lt.on { background: #000; color: #ccc; margin: 0 -8px 0 8px; width: 46px; padding: 0 10px; clip-path: polygon(0 0, 100% 0, 88% 100%, 12% 100%); }
.lt.on::after { display: none; }
.hs-l { margin-left: auto; width: 6px; height: 6px; border: 0 solid #555; border-width: 0 0 2px 2px; transform: rotate(45deg); flex: none; }
.hs-th { width: 16px; height: 14px; background: #c8c8c8; margin-left: 6px; flex: none; }
.hs-r { margin: 0 27px 0 428px; width: 6px; height: 6px; border: 0 solid #555; border-width: 2px 2px 0 0; transform: rotate(45deg); flex: none; }

.rcol { flex: 1; background: #6a6a6a; padding: 6px 0 0 5px; }
.rbar { background: #ececec; width: 18px; display: flex; flex-direction: column; align-items: center; }
.rbar.one { height: 347px; padding-top: 2px; }
.rbar.two { height: 120px; margin-top: 7px; padding-top: 2px; }
.ri { width: 16px; height: 16px; margin: 1.600px 0; }

/* command line */
.cmd { flex: 1; display: flex; border-top: 3px solid #4e4e4e; min-height: 0; }
.grip { width: 25px; flex: none; background: #6e6e6e; display: flex; flex-direction: column; align-items: center; margin-left: 5px; padding-top: 3px; }
.grip-d { width: 20px; height: 8px; background: repeating-linear-gradient(90deg, #999 0 1px, transparent 1px 3px); }
.cx { color: #eee; font: 700 20px/20px "Liberation Sans", sans-serif; margin-top: 3px; }
.cmd-lines { flex: 1; display: flex; flex-direction: column; min-width: 0; }
.c-hist { height: 23px; background: #c2c2c2; color: #3a3a3a; font: 17px/21px "Liberation Mono", "Noto Sans CJK SC", monospace; padding-left: 2px; flex: none; white-space: nowrap; }
.c-in { flex: 1; background: #fafafa; border-top: 1px solid #eee; display: flex; align-items: center; padding: 0 0 3px 4px; color: #333; min-height: 0; }
.c-ic { width: 26px; height: 13px; fill: none; margin-right: 9px; flex: none; }
.c-s { stroke: #777; stroke-width: 1.300; }
.c-b { stroke: #4a8ac8; stroke-width: 1.300; }
.c-in b { font: 700 14.500px/18px "Liberation Sans", sans-serif; color: #222; margin-right: 6px; }
.c-tx { font: 17px/18px "Liberation Mono", "Noto Sans CJK SC", monospace; color: #444; white-space: pre; }

/* overlays */
.a-btn { position: absolute; left: 0; top: 0; width: 30px; height: 31px; background: linear-gradient(#9a9a9a,#757575); border-right: 1px solid #555; border-bottom: 1px solid #555; display: flex; align-items: flex-start; padding: 1px 0 0 1px; }
.a-logo { width: 22px; height: 22px; flex: none; }
.a-red { fill: #c8201c; stroke: #7a1410; stroke-width: .6; }
.a-caret { width: 3px; height: 2px; background: #333; margin: 12px 0 0 2px; flex: none; }

.wm-top { position: absolute; left: 46px; top: 46px; display: flex; align-items: center; height: 58px; color: #fff; font-weight: 700; transform: skewX(-8deg); text-shadow: 0 0 3px #000, 0 0 5px #000, 2px 2px 4px #000; }
.wm-c { font-size: 40px; line-height: 1; -webkit-text-stroke: 4px #161616; paint-order: stroke fill; letter-spacing: 4px; transform: scaleY(.88); margin-top: -10px; }
.wm-l { font: 700 48px/1 "Open Sans", "Liberation Sans", sans-serif; -webkit-text-stroke: 4px #161616; paint-order: stroke fill; margin-top: -6px; }
.wm-o { width: 26px; height: 26px; border-radius: 50%; background: #2b7fd8; position: relative; margin: 10px -2px 0 -1px; border: 2px solid #111; flex: none; }
.wm-play { position: absolute; left: 8px; top: 5px; width: 0; height: 0; border: 6px solid transparent; border-left: 10px solid #fff; border-right: 0; }
.wm-tick { position: absolute; left: 5px; top: -15px; width: 13px; height: 7px; border: 0 solid #e8c838; border-width: 0 0 3px 3px; transform: rotate(-45deg); }

.wm-box { position: absolute; left: 1162px; top: 695px; width: 340px; height: 160px; background: #1f3058; display: flex; align-items: flex-start; }
.wm-logo { width: 66px; height: 68px; margin: 46px 0 0 26px; fill: none; stroke: #c9c9c9; stroke-width: 5.500; stroke-linecap: round; flex: none; }
.wm-f { fill: #c9c9c9; stroke: none; }
.wm-txt { margin: 38px 0 0 23px; color: #c9c9c9; }
.wm-cn { font-size: 45px; line-height: 50px; font-weight: 900; letter-spacing: 7px; white-space: nowrap; }
.wm-en { font: 300 19px/22px "Inter", "Liberation Sans", sans-serif; letter-spacing: 3px; margin-top: 5px; white-space: nowrap; color: #c4c4c8; }

.ime { position: absolute; left: 1151px; top: 862px; width: 109px; height: 30px; background: #fff; border: 2px solid #8fb4dc; display: flex; justify-content: space-around; padding: 2px 8px 0; color: #2a70b8; font-size: 15px; line-height: 16px; font-weight: 700; }
```
